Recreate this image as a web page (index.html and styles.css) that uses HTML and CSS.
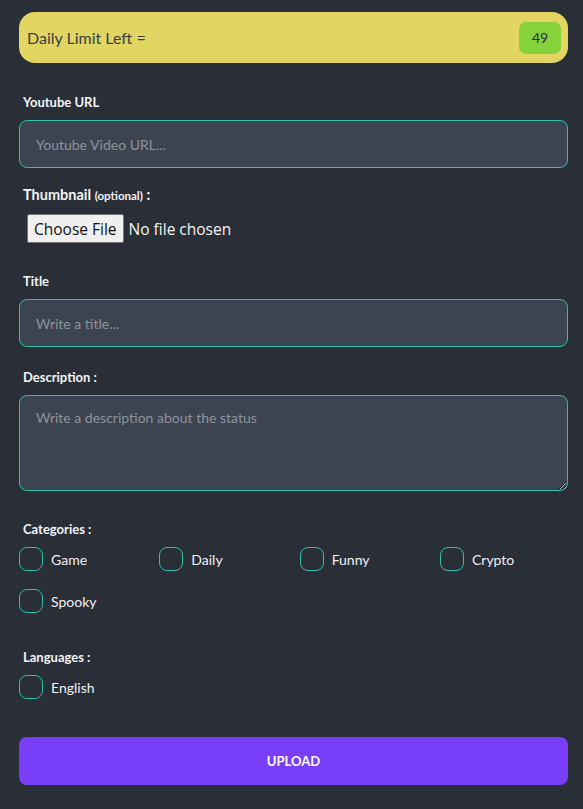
FILE: index.html
```html
<!DOCTYPE html>
<html lang="en">
<head>
<meta charset="utf-8">
<title>Upload</title>
<link rel="stylesheet" href="styles.css">
</head>
<body>
<form class="page">
  <div class="limit">
    <span class="limit-text">Daily Limit Left =</span>
    <span class="limit-badge">49</span>
  </div>

  <label class="label label-url">Youtube URL</label>
  <input class="field" type="text" placeholder="Youtube Video URL...">

  <label class="label label-thumb">Thumbnail <small class="opt">(optional)</small> :</label>
  <input class="file" type="file">

  <label class="label label-title">Title</label>
  <input class="field" type="text" placeholder="Write a title...">

  <label class="label label-desc">Description :</label>
  <textarea class="area" placeholder="Write a description about the status"></textarea>

  <div class="label label-cat">Categories :</div>
  <div class="checks">
    <label class="check"><input type="checkbox" class="box"><span>Game</span></label>
    <label class="check"><input type="checkbox" class="box"><span>Daily</span></label>
    <label class="check"><input type="checkbox" class="box"><span>Funny</span></label>
    <label class="check"><input type="checkbox" class="box"><span>Crypto</span></label>
    <label class="check"><input type="checkbox" class="box"><span>Spooky</span></label>
  </div>

  <div class="label label-lang">Languages :</div>
  <div class="checks">
    <label class="check"><input type="checkbox" class="box"><span>English</span></label>
  </div>

  <button class="upload" type="button">UPLOAD</button>
</form>
</body>
</html>
```

FILE: styles.css
```css
* { box-sizing: border-box; }

html, body {
  margin: 0;
  padding: 0;
  background: #2a2e37;
}

body {
  font-family: Lato, "Open Sans", sans-serif;
  color: #ebecf0;
}

.page {
  display: flex;
  flex-direction: column;
  padding: 12px 15px 24px 19px;
}

.limit {
  display: flex;
  align-items: center;
  justify-content: space-between;
  height: 51px;
  padding: 0 7px 0 8px;
  background: #e2d562;
  border-radius: 16px;
}

.limit-text {
  font-size: 16px;
  color: #3a3f44;
}

.limit-badge {
  display: flex;
  align-items: center;
  justify-content: center;
  width: 42px;
  height: 32px;
  background: #86d23a;
  border-radius: 7px;
  font-size: 14px;
  color: #2a2e37;
}

.label {
  display: block;
  padding: 8px 4px;
  line-height: 20px;
  font-size: 13px;
  font-weight: 700;
  color: #f2f3f5;
}

.label-thumb {
  font-size: 14.5px;
}

.opt {
  font-size: 11.5px;
  font-weight: 700;
}

.label-url { margin-top: 21px; }
.label-thumb { margin-top: 9px; }
.label-title { margin-top: 20px; }
.label-desc { margin-top: 12px; }
.label-cat { margin-top: 20px; }
.label-lang { margin-top: 26px; }

.field, .area {
  width: 100%;
  background: #3d4451;
  border: 1px solid #2fc1ab;
  border-radius: 8px;
  color: #ebecf0;
  font-family: Lato, "Open Sans", sans-serif;
  font-size: 14px;
  padding: 0 16px;
  outline: none;
}

.field { height: 48px; }

.area {
  display: block;
  height: 96px;
  padding: 12px 16px;
  line-height: 20px;
  resize: vertical;
}

.field::placeholder, .area::placeholder {
  color: #8d929b;
}

.file {
  margin: 0 0 0 8px;
  font-family: "Open Sans", sans-serif;
  font-size: 15.5px;
  color: #f4f4f4;
  height: 29px;
}

.file::file-selector-button {
  font-family: "Open Sans", sans-serif;
  font-size: 15.5px;
  background: #efefef;
  color: #111;
  border: 1px solid #767676;
  border-radius: 2px;
  height: 29px;
  padding: 0 6px;
  margin-right: 5px;
}

.checks {
  display: grid;
  grid-template-columns: repeat(4, 140.33px);
  row-gap: 18px;
}

.check {
  display: flex;
  align-items: center;
  gap: 8px;
  height: 24px;
  font-size: 14px;
  color: #eef0f3;
}

.box {
  appearance: none;
  -webkit-appearance: none;
  margin: 0;
  width: 24px;
  height: 24px;
  border: 1px solid #2fc1ab;
  border-radius: 8px;
  background: transparent;
  flex: none;
}

.upload {
  margin-top: 38px;
  height: 48px;
  width: 100%;
  border: none;
  border-radius: 8px;
  background: #793ef9;
  color: #ffffff;
  font-family: Lato, "Open Sans", sans-serif;
  font-size: 13px;
  font-weight: 700;
}
```
